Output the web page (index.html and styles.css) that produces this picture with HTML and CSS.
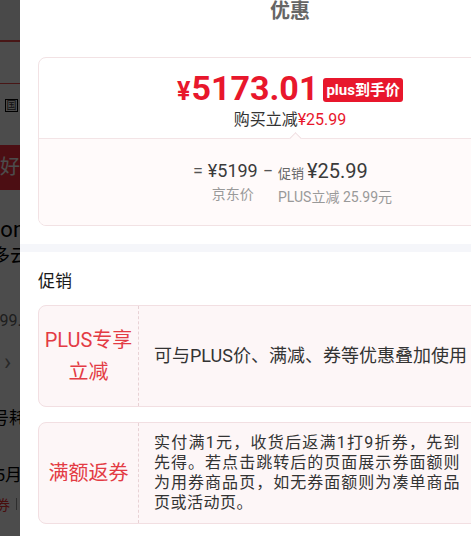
FILE: index.html
```html
<!DOCTYPE html>
<html lang="zh-CN">
<head>
	<meta charset="UTF-8">
	<meta name="viewport" content="width=device-width,user-scalable=no">
	<title>优惠</title>
	<link rel="stylesheet" href="styles.css">
</head>
<body>
	<!-- 商品页（被遮罩盖住） -->
	<div class="page">
		<div class="pg-head"></div>
		<div class="pg-tabs"></div>
		<div class="pg-row"><span class="pg-tag">国</span></div>
		<div class="pg-banner">你好</div>
		<div class="pg-name">iPhone 16</div>
		<div class="pg-weather">多云</div>
		<div class="pg-price">¥5199.00</div>
		<div class="pg-arrow">›</div>
		<div class="pg-line pg-cut1">手机号耗</div>
		<div class="pg-line pg-cut2">25月</div>
		<div class="pg-red">券<span class="pg-bar"></span></div>
	</div>
	<div class="mask"></div>

	<!-- 优惠弹层 -->
	<section class="sheet">
		<h2 class="sheet-title">优惠</h2>

		<div class="price-card">
			<div class="price-top">
				<div class="price-line">
					<span class="price"><i>¥</i>5173.01</span>
					<span class="price-tag">plus到手价</span>
				</div>
				<p class="price-save">购买立减<em>¥25.99</em></p>
			</div>
			<div class="price-calc">
				<span class="op">=</span>
				<div class="calc-item center">
					<b>¥5199</b>
					<span>京东价</span>
				</div>
				<span class="op">−</span>
				<div class="calc-item">
					<b><small>促销</small>¥25.99</b>
					<span>PLUS立减 25.99元</span>
				</div>
			</div>
		</div>

		<div class="gap"></div>

		<h3 class="block-title">促销</h3>
		<ul class="promo-list">
			<li>
				<div class="promo-name">PLUS专享立减</div>
				<div class="promo-desc one">可与PLUS价、满减、券等优惠叠加使用</div>
			</li>
			<li>
				<div class="promo-name">满额返券</div>
				<div class="promo-desc"><p>实付满1元，收货后返满1打9折券，先到先得。若点击跳转后的页面展示券面额则为用券商品页，如无券面额则为凑单商品页或活动页。</p></div>
			</li>
		</ul>
	</section>
</body>
</html>
```

FILE: styles.css
```css
body{
	margin: 0;
	width: 471px;
	height: 536px;
	overflow: hidden;
	font-family: Roboto, "Noto Sans CJK SC", sans-serif;
	color: #333;
}
p, h2, h3, ul{
	margin: 0;
	padding: 0;
}

/* 底下的商品页 */
.page{
	height: 536px;
	background: #fff;
	white-space: nowrap;
	overflow: hidden;
}
.pg-head{
	height: 40px;
	background: #f4f4f4;
	border-bottom: 2px solid #f04a4a;
}
.pg-tabs{
	height: 41px;
	border-bottom: 1px solid #f04a4a;
}
.pg-row{
	height: 60px;
	padding-left: 5px;
	padding-top: 15px;
	box-sizing: border-box;
}
.pg-tag{
	display: inline-block;
	width: 11px;
	height: 11px;
	border: 1px solid #000;
	font-size: 10px;
	line-height: 11px;
	text-align: center;
	vertical-align: top;
}
.pg-banner{
	height: 45px;
	background: #ff3040;
	color: #fff;
	font-size: 20px;
	line-height: 45px;
	text-indent: -20px;
	margin-top: 1px;
}
.pg-name{
	margin-top: 26px;
	font-size: 22px;
	line-height: 28px;
	color: #000;
	text-indent: -31px;
}
.pg-weather{
	font-size: 18px;
	line-height: 24px;
	color: #000;
	text-indent: -8px;
}
.pg-price{
	margin-top: 42px;
	font-size: 16px;
	line-height: 22px;
	color: #666;
	text-indent: -27px;
}
.pg-arrow{
	margin-top: 18px;
	padding-left: 4px;
	font-size: 24px;
	line-height: 24px;
	color: #888;
}
.pg-line{
	font-size: 17px;
	line-height: 24px;
	color: #000;
}
.pg-cut1{
	margin-top: 32px;
	text-indent: -42px;
}
.pg-cut2{
	margin-top: 33px;
	text-indent: -14px;
}
.pg-red{
	margin-top: 8px;
	font-size: 14px;
	line-height: 20px;
	color: #f23030;
	text-indent: -4px;
}
.pg-bar{
	display: inline-block;
	width: 1px;
	height: 12px;
	margin-left: 6px;
	background: #999;
}
.mask{
	position: fixed;
	left: 0;
	top: 0;
	right: 0;
	bottom: 0;
	background: rgba(0,0,0,.7);
}

/* 弹层 */
.sheet{
	position: fixed;
	left: 20px;
	top: 0;
	width: 540px;
	bottom: 0;
	background: #fff;
}
.sheet-title{
	font-size: 20px;
	line-height: 22px;
	font-weight: 700;
	color: #666;
	text-align: center;
}

.price-card{
	margin: 35px 18px 0;
	border: 1px solid #f2e2e4;
	border-radius: 8px;
	overflow: hidden;
}
.price-top{
	padding: 13px 0 7px;
	text-align: center;
}
.price-line{
	display: flex;
	justify-content: center;
	align-items: center;
	height: 38px;
}
.price{
	font-size: 34px;
	font-weight: 700;
	color: #e8172c;
	line-height: 38px;
}
.price i{
	font-style: normal;
	font-size: 25px;
	margin-right: 1px;
}
.price-tag{
	margin-left: 5px;
	padding: 0 3px;
	height: 24px;
	line-height: 24px;
	border-radius: 3px;
	background: #e8172c;
	color: #fff;
	font-size: 15px;
	font-weight: 700;
}
.price-save{
	font-size: 16px;
	line-height: 22px;
	color: #333;
}
.price-save em{
	font-style: normal;
	color: #e8172c;
}

.price-calc{
	position: relative;
	display: flex;
	justify-content: center;
	align-items: flex-start;
	padding: 19px 0 18px;
	border-top: 1px solid #f3e4e6;
	background: #fffafa;
}
.price-calc:before{
	content: "";
	position: absolute;
	left: 50%;
	top: -5px;
	width: 8px;
	height: 8px;
	margin-left: 1px;
	border-left: 1px solid #f0dfe2;
	border-top: 1px solid #f0dfe2;
	background: #fffafa;
	transform: rotate(45deg);
}
.op{
	font-size: 18px;
	line-height: 26px;
	color: #555;
	margin: 0 5px;
}
.calc-item{
	display: flex;
	flex-direction: column;
}
.calc-item.center{
	align-items: center;
}
.calc-item b{
	font-weight: 400;
	font-size: 20px;
	line-height: 26px;
	color: #3a3a3a;
}
.calc-item.center b{
	font-size: 18px;
}
.calc-item small{
	font-size: 13px;
	color: #666;
	margin-right: 3px;
}
.calc-item span{
	font-size: 14px;
	line-height: 20px;
	color: #999;
}

.gap{
	height: 8px;
	margin-top: 18px;
	background: #f5f6fa;
}
.block-title{
	margin: 17px 18px 0;
	font-size: 17px;
	line-height: 24px;
	font-weight: 400;
	color: #1a1a1a;
}

.promo-list{
	list-style: none;
	margin: 12px 18px 0;
}
.promo-list li{
	display: flex;
	min-height: 102px;
	box-sizing: border-box;
	border: 1px solid #f2dfe2;
	border-radius: 8px;
	background: #fdf6f7;
	margin-bottom: 15px;
}
.promo-name{
	flex: none;
	width: 100px;
	padding: 0 4px;
	box-sizing: border-box;
	border-right: 1px dashed #e8d2d5;
	display: flex;
	align-items: center;
	justify-content: center;
	text-align: center;
	font-size: 20px;
	line-height: 32px;
	color: #e33b44;
}
.promo-desc{
	display: flex;
	align-items: center;
	padding: 0 15px;
	font-size: 16px;
	line-height: 20px;
	color: #333;
}
.promo-desc p{
	width: 306px;
	text-align: justify;
	letter-spacing: .5px;
}
.promo-desc.one{
	font-size: 18px;
	white-space: nowrap;
}
```
